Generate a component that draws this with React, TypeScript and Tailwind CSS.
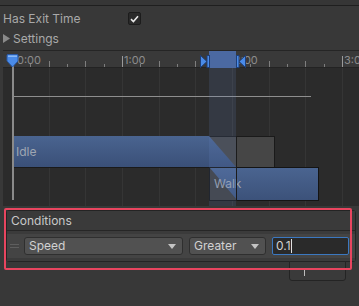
const gridXs = [48.7, 85.3, 122, 158.7, 195.3, 232, 268.7, 305.3, 342];
const tickXs = Array.from({ length: 20 }, (_, i) => 12 + i * 18.33).filter((x) => x < 359);

function Ruler() {
  return (
    <div className="relative h-[17px] bg-[#393939] border-b border-[#232323]">
      {tickXs.map((x, i) => {
        const major = i % 6 === 0;
        const tall = i % 2 === 0;
        return (
          <div
            key={i}
            className={`absolute bottom-0 w-px ${major ? "h-[11px] bg-[#9a9a9a]" : tall ? "h-[6px] bg-[#7e7e7e]" : "h-[3px] bg-[#7e7e7e]"}`}
            style={{ left: x - 3 }}
          />
        );
      })}
      <span className="absolute left-[14px] top-[1px] text-[11px] text-[#8c8c8c]">0:00</span>
      <span className="absolute left-[121px] top-[1px] text-[11px] text-[#8c8c8c]">1:00</span>
      <span className="absolute left-[231px] top-[1px] text-[11px] text-[#8c8c8c]">2:00</span>
      <span className="absolute left-[341px] top-[1px] text-[11px] text-[#8c8c8c]">3:0</span>
      {/* transition band in ruler */}
      <div className="absolute left-[206px] top-0 w-[27px] h-[17px] bg-[#4b69a2]" />
    </div>
  );
}

function Timeline() {
  return (
    <div className="relative ml-[3px] h-[156px] border-t border-[#252525] bg-[#2b2b2b]">
      <Ruler />
      {/* grid lines */}
      {gridXs.map((x) => (
        <div key={x} className="absolute top-[17px] bottom-0 w-px bg-[#353535]" style={{ left: x - 3 }} />
      ))}
      {/* curve line */}
      <div className="absolute left-[9px] top-[45px] w-[299px] h-px bg-[#8e8e8e]" />

      {/* idle bar: gray tail */}
      <div className="absolute left-[206px] top-[85px] w-[66px] h-[32px] bg-[#464646] border border-[#1a1a1a]" />
      {/* idle bar: blue part */}
      <div
        className="absolute left-[9px] top-[85px] w-[224px] h-[31px] bg-gradient-to-b from-[#4a6490] to-[#3a5078] [clip-path:polygon(0_0,197px_0,224px_100%,0_100%)]"
      />
      <div className="absolute left-[9px] top-[116px] w-[197px] h-px bg-[#1a1a1a]" />
      <span className="absolute left-[13px] top-[92px] text-[12px] text-[#9fa6b2]">Idle</span>

      {/* walk bar */}
      <div className="absolute left-[206px] top-[116px] w-[110px] h-[34px] border border-[#141414] bg-gradient-to-b from-[#4a6490] to-[#3c527a] overflow-hidden">
        <div className="absolute left-0 top-0 w-[27px] h-full bg-[#3f3f3f] [clip-path:polygon(0_0,100%_100%,0_100%)]" />
        <span className="absolute left-[4px] top-[7px] text-[12px] text-[#9aa2ae]">Walk</span>
      </div>

      {/* transition band overlay in body */}
      <div className="absolute left-[206px] top-[17px] w-[27px] bottom-0 bg-[#6d8fd0]/15" />
      <div className="absolute left-[233px] top-[85px] w-px h-[65px] bg-[#1c1c1c]" />

      {/* playhead */}
      <div className="absolute left-[9px] top-[14px] bottom-[6px] w-[2px] bg-[#8a8a8a]" />
      <svg className="absolute left-[3px] top-[3px]" width="13" height="14" viewBox="0 0 13 14">
        <path d="M1 1.5 Q1 0.5 2 0.5 H11 Q12 0.5 12 1.5 V7 L6.5 13 L1 7 Z" fill="#4a8be8" stroke="#2a5aa8" strokeWidth="1" />
        <path d="M2 1.5 H11 V3 H2 Z" fill="#8ab8f5" />
      </svg>

      {/* transition markers */}
      <svg className="absolute left-[197px] top-[4px]" width="10" height="13" viewBox="0 0 10 13">
        <path d="M0.5 0.5 L7 6.5 L0.5 12.5 Z" fill="#4a8be8" stroke="#1e3f78" strokeWidth="1" />
        <rect x="7" y="0.5" width="2.5" height="12" fill="#4a8be8" stroke="#1e3f78" strokeWidth="1" />
      </svg>
      <svg className="absolute left-[233px] top-[4px]" width="10" height="13" viewBox="0 0 10 13">
        <rect x="0.5" y="0.5" width="2.5" height="12" fill="#4a8be8" stroke="#1e3f78" strokeWidth="1" />
        <path d="M9.5 0.5 L3 6.5 L9.5 12.5 Z" fill="#4a8be8" stroke="#1e3f78" strokeWidth="1" />
      </svg>
    </div>
  );
}

function Dropdown({ label, className }: { label: string; className: string }) {
  return (
    <div className={`flex items-center justify-between h-[18px] rounded-[3px] bg-[#515151] border border-[#2f2f2f] pl-[4px] pr-[6px] ${className}`}>
      <span className="text-[12px] text-[#d2d2d2]">{label}</span>
      <svg width="8" height="5" viewBox="0 0 8 5">
        <path d="M0 0 H8 L4 5 Z" fill="#c4c4c4" />
      </svg>
    </div>
  );
}

export default function App() {
  return (
    <div className="relative w-[359px] h-[306px] overflow-hidden bg-[#383838] font-['Inter',sans-serif]">
      <div className="h-[5px] bg-[#363636]" />
      <div className="h-px bg-[#1f1f1f]" />

      <div className="flex items-center h-[21px] mt-[2px] pl-[3px]">
        <span className="w-[125px] text-[12px] text-[#a9a9a9]">Has Exit Time</span>
        <div className="flex items-center justify-center w-[13px] h-[13px] rounded-[2px] bg-[#2a2a2a] border border-[#1c1c1c]">
          <svg width="9" height="8" viewBox="0 0 9 8">
            <path d="M1 4.2 L3.4 6.5 L8 1.2" fill="none" stroke="#e8e8e8" strokeWidth="1.6" />
          </svg>
        </div>
      </div>

      <div className="flex items-center h-[19px] pl-[3px]">
        <svg width="8" height="9" viewBox="0 0 8 9" className="mr-[2px]">
          <path d="M0 0 L7 4.5 L0 9 Z" fill="#8a8a8a" />
        </svg>
        <span className="text-[12px] text-[#a9a9a9]">Settings</span>
      </div>

      <div className="h-[2px]" />
      <Timeline />

      <div className="h-[4px]" />
      <div className="relative mx-[6px] mr-[3px]">
        <div className="rounded-[3px] border border-[#242424] bg-[#3e3e3e]">
          <div className="flex items-center h-[20px] pl-[4px] bg-[#3a3a3a] border-b border-[#262626]">
            <span className="text-[12px] text-[#c9c9c9]">Conditions</span>
          </div>
          <div className="py-[3px] bg-[#3b3b3b]">
            <div className="flex items-center h-[24px] bg-[#444444] pl-[3px] gap-[5px]">
              <div className="flex flex-col gap-[2px] w-[9px]">
                <div className="h-px bg-[#5e5e5e]" />
                <div className="h-px bg-[#5e5e5e]" />
              </div>
              <Dropdown label="Speed" className="w-[159px]" />
              <Dropdown label="Greater" className="w-[77px] ml-px" />
              <div className="flex items-center w-[77px] h-[18px] ml-px rounded-[2px] bg-[#2a2a2a] border border-[#3b78c0] pl-[3px]">
                <span className="text-[12px] text-[#d2d2d2]">0.1</span>
                <div className="w-px h-[14px] bg-[#e0e0e0]" />
              </div>
            </div>
          </div>
        </div>
        <div className="flex justify-start ml-[283px] w-[57px] h-[20px] -mt-px rounded-b-[3px] border border-[#242424] bg-[#3a3a3a]">
          <div className="ml-[14px] mt-[7px] w-px h-[7px] bg-[#bdbdbd]" />
        </div>
      </div>

      {/* highlight annotation */}
      <div className="absolute left-[4px] top-[208px] w-[348px] h-[62px] border-2 border-[#e8455f] rounded-[2px]" />
    </div>
  );
}
